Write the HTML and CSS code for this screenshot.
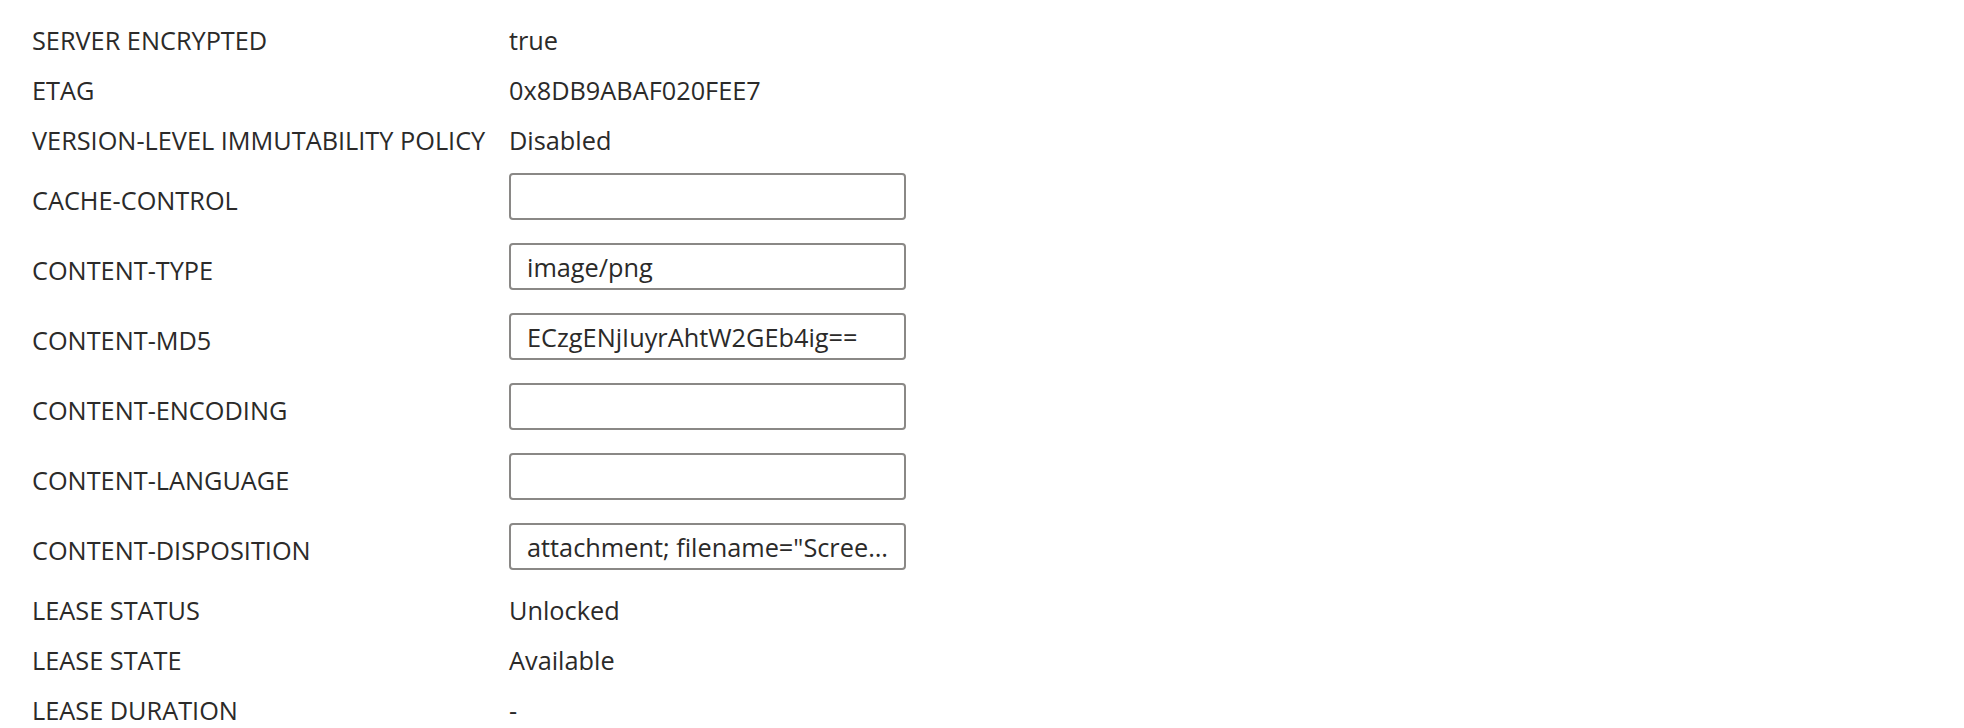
FILE: index.html
```html
<!DOCTYPE html>
<html lang="en">
<head>
<meta charset="utf-8">
<title>Blob properties</title>
<link rel="stylesheet" href="styles.css">
</head>
<body>
<div class="props">
  <div class="row"><div class="label">SERVER ENCRYPTED</div><div class="value">true</div></div>
  <div class="row"><div class="label">ETAG</div><div class="value">0x8DB9ABAF020FEE7</div></div>
  <div class="row"><div class="label">VERSION-LEVEL IMMUTABILITY POLICY</div><div class="value">Disabled</div></div>
  <div class="row edit"><div class="label">CACHE-CONTROL</div><div class="value"><input class="field" type="text" value=""></div></div>
  <div class="row edit"><div class="label">CONTENT-TYPE</div><div class="value"><input class="field" type="text" value="image/png"></div></div>
  <div class="row edit"><div class="label">CONTENT-MD5</div><div class="value"><input class="field" type="text" value="ECzgENjIuyrAhtW2GEb4ig=="></div></div>
  <div class="row edit"><div class="label">CONTENT-ENCODING</div><div class="value"><input class="field" type="text" value=""></div></div>
  <div class="row edit"><div class="label">CONTENT-LANGUAGE</div><div class="value"><input class="field" type="text" value=""></div></div>
  <div class="row edit"><div class="label">CONTENT-DISPOSITION</div><div class="value"><input class="field" type="text" value="attachment; filename=&quot;Screenshot 2023-08-10 at 14.32.05.png&quot;"></div></div>
  <div class="row"><div class="label">LEASE STATUS</div><div class="value">Unlocked</div></div>
  <div class="row"><div class="label">LEASE STATE</div><div class="value">Available</div></div>
  <div class="row"><div class="label">LEASE DURATION</div><div class="value">-</div></div>
</div>
</body>
</html>
```

FILE: styles.css
```css
html, body {
  margin: 0;
  padding: 0;
  background: #ffffff;
}
body {
  font-family: "Open Sans", "Noto Sans", sans-serif;
  font-size: 25.3px;
  color: #2b2a29;
  overflow: hidden;
}
.props {
  padding: 15px 0 0 32px;
  display: flex;
  flex-direction: column;
}
.row {
  display: grid;
  grid-template-columns: 477px 1fr;
  height: 50px;
  align-items: center;
  line-height: 50px;
}
.row.edit {
  height: 70px;
}
.row.edit .value {
  align-self: start;
  padding-top: 8px;
}
.label, .value {
  white-space: nowrap;
}
.field {
  box-sizing: border-box;
  display: block;
  width: 397px;
  height: 47px;
  margin: 0;
  padding: 0 16px;
  border: 2px solid #8a8886;
  border-radius: 4px;
  font-family: inherit;
  font-size: 25.3px;
  color: #2b2a29;
  background: #fff;
  outline: none;
  text-overflow: ellipsis;
}
```
